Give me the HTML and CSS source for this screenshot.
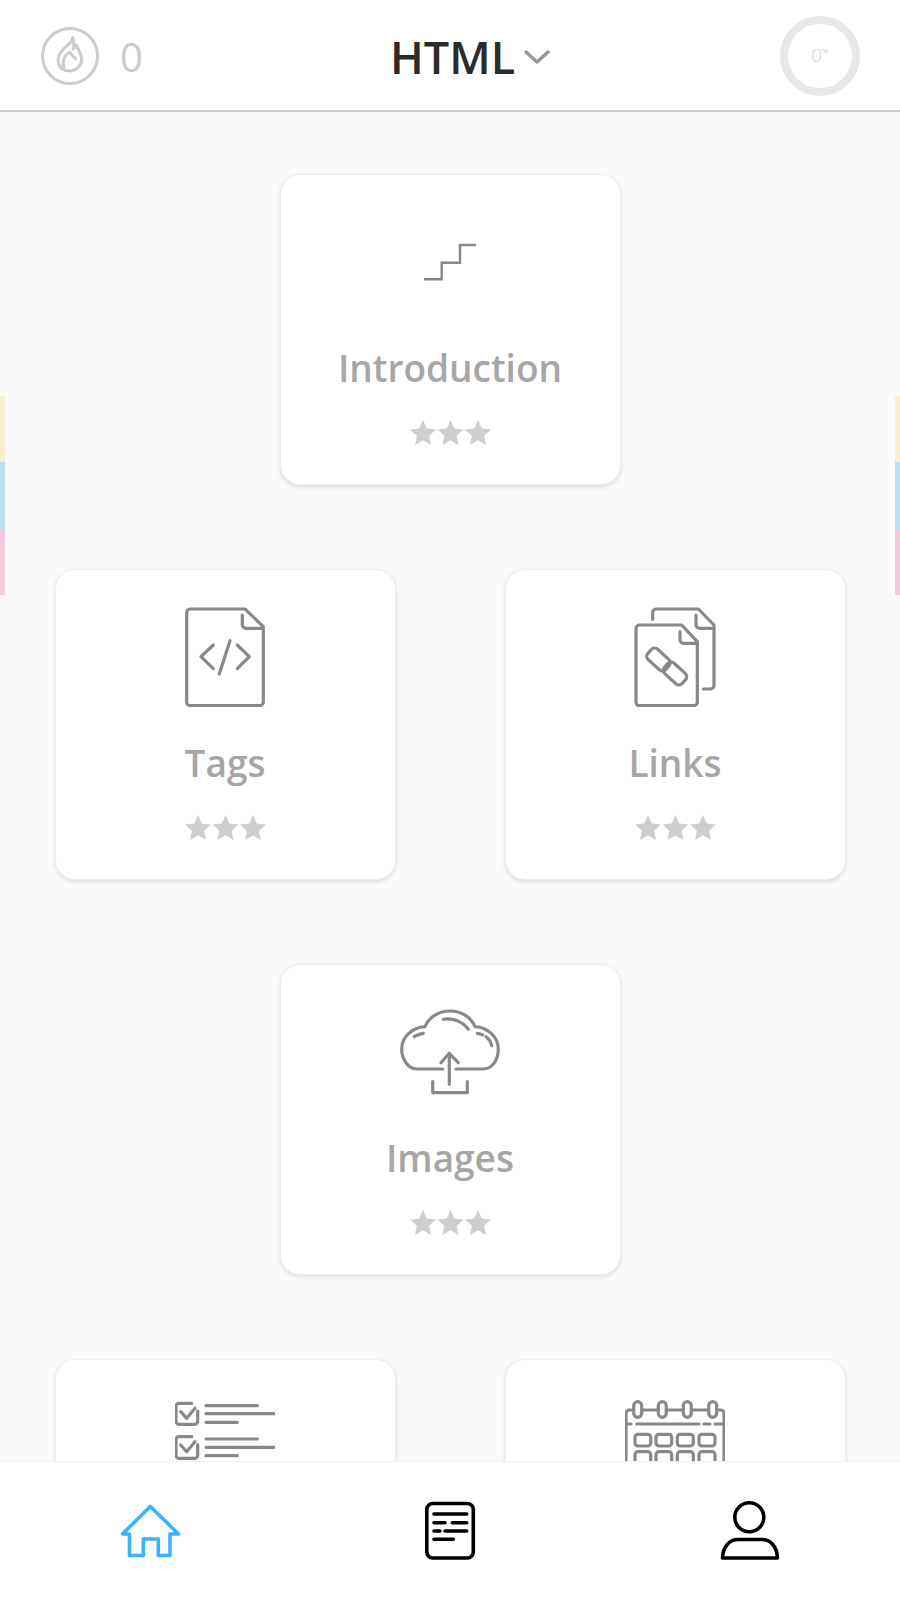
FILE: index.html
```html
<!DOCTYPE html>
<html lang="en">
<head>
  <meta charset="UTF-8">
  <title>HTML Course</title>
  <link rel="stylesheet" href="styles.css">
</head>
<body>

  <svg class="defs" width="0" height="0">
    <symbol id="star" viewBox="0 0 26 25">
      <polygon points="13,0 16.8,8.6 26,9.6 19.1,15.8 21,25 13,20.3 5,25 6.9,15.8 0,9.6 9.2,8.6"/>
    </symbol>
  </svg>

  <!-- Top bar -->
  <header class="topbar">
    <div class="streak">
      <svg class="streak-icon" width="58" height="58" viewBox="0 0 58 58">
        <circle cx="29" cy="29" r="27.5"/>
        <path d="M31.7 10.5C31 17 24 19 20 25C15 32 16.5 44 28 44C37 44 41 37 40.5 31C40 25 36.5 22 35.5 18C34.5 20 33.5 21 32 22C33 18 33 14 31.7 10.5Z"/>
        <path d="M23 41C20.5 34 23.5 28 29 25C29.5 28 33 29 34.5 32"/>
      </svg>
      <span class="streak-count">0</span>
    </div>
    <div class="course">
      <span class="course-name">HTML</span>
      <svg class="chevron" width="26" height="16" viewBox="0 0 26 16">
        <path d="M2 3L13 13L24 3"/>
      </svg>
    </div>
    <div class="progress">
      <span class="progress-num">0</span><span class="progress-pct">%</span>
    </div>
  </header>

  <!-- Lesson map -->
  <main class="lessons">
    <div class="row">
      <div class="card">
        <svg class="icon icon-thin" width="100" height="100" viewBox="0 0 100 100">
          <path d="M24 67.3H41.7V50.7H60V33H76"/>
        </svg>
        <div class="card-title">Introduction</div>
        <svg class="stars" width="81" height="25" viewBox="0 0 81 25">
          <use href="#star" x="0" width="26" height="25"/>
          <use href="#star" x="27.5" width="26" height="25"/>
          <use href="#star" x="55" width="26" height="25"/>
        </svg>
      </div>
    </div>

    <div class="row">
      <div class="card">
        <svg class="icon" width="100" height="100" viewBox="0 0 100 100">
          <path d="M70 2H15A3.5 3.5 0 0 0 11.7 5.5V95A3.5 3.5 0 0 0 15 98.7H85A3.5 3.5 0 0 0 88.3 95V19.7Z"/>
          <path d="M67.3 8V17.5A3.8 3.8 0 0 0 71 21.3H87"/>
          <path d="M38.3 38L26 49.7L38.3 61.7"/>
          <path d="M62.3 38L74.3 49.7L62.3 61.7"/>
          <path d="M55 33.7L44.3 67"/>
        </svg>
        <div class="card-title">Tags</div>
        <svg class="stars" width="81" height="25" viewBox="0 0 81 25">
          <use href="#star" x="0" width="26" height="25"/>
          <use href="#star" x="27.5" width="26" height="25"/>
          <use href="#star" x="55" width="26" height="25"/>
        </svg>
      </div>
      <div class="card">
        <svg class="icon" width="100" height="100" viewBox="0 0 100 100">
          <path d="M56.7 18H14.5A3.5 3.5 0 0 0 11 21.5V95A3.5 3.5 0 0 0 14.5 98.7H69A3.5 3.5 0 0 0 72.3 95V34.7Z"/>
          <path d="M55 24.7V33A3.5 3.5 0 0 0 58.5 36.3H71.7"/>
          <path d="M27.7 12.3V5.5A3.5 3.5 0 0 1 31 2H73.3L89 18V78.5A3.5 3.5 0 0 1 85.5 82H78.3"/>
          <path d="M71 8V17.5A3.8 3.8 0 0 0 75 21.3H86.7"/>
          <rect x="21.5" y="45.5" width="24" height="14" rx="4.5" transform="rotate(42 33.5 52.5)"/>
          <rect x="38" y="59.5" width="24" height="14" rx="4.5" transform="rotate(42 50 66.5)"/>
        </svg>
        <div class="card-title">Links</div>
        <svg class="stars" width="81" height="25" viewBox="0 0 81 25">
          <use href="#star" x="0" width="26" height="25"/>
          <use href="#star" x="27.5" width="26" height="25"/>
          <use href="#star" x="55" width="26" height="25"/>
        </svg>
      </div>
    </div>

    <div class="row">
      <div class="card">
        <svg class="icon" width="100" height="100" viewBox="0 0 100 100">
          <path d="M42.7 67H17C8 67 1.7 57 1.7 47C1.7 35 12 25.5 25 24.7C29 15 39 9 50 9C61 9 71 15 75 24.7C88 25.5 98.3 35 98.3 47C98.3 58 92 67 83.3 67H56"/>
          <path d="M43.3 17.3C52 15.5 62 19 68.3 27.3"/>
          <path d="M14.3 34.7C17 33 20 31.8 23.3 31.3"/>
          <path d="M77.3 31.3C79 31.5 81 32 82.7 33"/>
          <path d="M86 34.7C89 37 91 40 91.7 43.7"/>
          <path d="M49.3 82.3V52.3"/>
          <path d="M41 60.7L49.3 51.3L58.3 60.7"/>
          <path d="M32.7 79.7V90.7H67.3V79.7"/>
        </svg>
        <div class="card-title">Images</div>
        <svg class="stars" width="81" height="25" viewBox="0 0 81 25">
          <use href="#star" x="0" width="26" height="25"/>
          <use href="#star" x="27.5" width="26" height="25"/>
          <use href="#star" x="55" width="26" height="25"/>
        </svg>
      </div>
    </div>

    <div class="row">
      <div class="card">
        <svg class="icon" width="100" height="100" viewBox="0 0 100 100">
          <path d="M16.7 6.3H4A3 3 0 0 0 1 9.3V24.3A3 3 0 0 0 4 27.3H19.7A3 3 0 0 0 22.7 24.3V14"/>
          <path d="M5.7 14.7L11.7 21.3L20 11.3"/>
          <path d="M31 8.7H82.3M31 16.7H99.3M31 25.3H62.3"/>
          <path d="M16.7 39.7H4A3 3 0 0 0 1 42.7V58.3A3 3 0 0 0 4 61.3H19.7A3 3 0 0 0 22.7 58.3V47.5"/>
          <path d="M5.7 48L11.7 54.7L20 44.7"/>
          <path d="M31 42H82.3M31 50.3H99.3M31 58.7H62.3"/>
        </svg>
      </div>
      <div class="card">
        <svg class="icon" width="100" height="100" viewBox="0 0 100 100">
          <path d="M8.7 13H4.5A3.5 3.5 0 0 0 1 16.5V100M16.7 13H33.3M41.3 13H58.3M66.3 13H83.7M91.7 13H95.5A3.5 3.5 0 0 1 99 16.5V100"/>
          <rect x="8.7" y="4.7" width="8" height="15.6" rx="4"/>
          <rect x="33.3" y="4.7" width="8" height="15.6" rx="4"/>
          <rect x="58.3" y="4.7" width="8" height="15.6" rx="4"/>
          <rect x="83.7" y="4.7" width="8" height="15.6" rx="4"/>
          <path d="M1 27H6M11.7 27H74M79 27H85M90 27H99"/>
          <rect x="10" y="37.3" width="15.7" height="11.7" rx="3"/>
          <rect x="31" y="37.3" width="15.7" height="11.7" rx="3"/>
          <rect x="52.3" y="37.3" width="16" height="11.7" rx="3"/>
          <rect x="74" y="37.3" width="16" height="11.7" rx="3"/>
          <rect x="10" y="54.7" width="15.7" height="11.7" rx="3"/>
          <rect x="31" y="54.7" width="15.7" height="11.7" rx="3"/>
          <rect x="52.3" y="54.7" width="16" height="11.7" rx="3"/>
          <rect x="74" y="54.7" width="16" height="11.7" rx="3"/>
        </svg>
      </div>
    </div>
  </main>

  <!-- Colour strips on the edges -->
  <div class="strip strip-left"><i class="yellow"></i><i class="blue"></i><i class="pink"></i></div>
  <div class="strip strip-right"><i class="yellow"></i><i class="blue"></i><i class="pink"></i></div>

  <!-- Bottom tabs -->
  <nav class="tabs">
    <svg class="tab-icon tab-active" width="64" height="64" viewBox="0 0 64 64">
      <path d="M4.5 35L32.3 7.5L60.5 35H52V56.5H40.3V40H25.3V56.5H11.5V35Z"/>
    </svg>
    <svg class="tab-icon" width="64" height="64" viewBox="0 0 64 64">
      <rect x="8.8" y="4.5" width="46.5" height="54.5" rx="6"/>
      <path d="M16 15H48.7M16 23.7H27M34.3 23.7H48.7M16 32H22M27 32H48.7M16 40.3H35.3"/>
    </svg>
    <svg class="tab-icon" width="64" height="64" viewBox="0 0 64 64">
      <circle cx="31.3" cy="18.3" r="14.5"/>
      <path d="M4.5 59H59.5C59 47 52 40.5 44 40.5H20C12 40.5 5 47 4.5 59Z"/>
    </svg>
  </nav>

</body>
</html>
```

FILE: styles.css
```css
html, body {
  margin: 0;
  height: 100%;
}
body {
  position: relative;
  display: flex;
  flex-direction: column;
  height: 1600px;
  overflow: hidden;
  background: #fafafa;
  font-family: "Open Sans", "Noto Sans", sans-serif;
}
.defs {
  position: absolute;
}

.topbar {
  flex: none;
  display: flex;
  align-items: center;
  height: 107px;
  padding: 3px 40px 0 41px;
  background: #fff;
  border-bottom: 2px solid #ccc;
}
.streak {
  flex: 0 0 349px;
  display: flex;
  align-items: center;
  gap: 21px;
}
.streak-icon {
  margin-bottom: 2px;
  fill: none;
  stroke: #ccc;
  stroke-width: 3;
  stroke-linejoin: round;
  stroke-linecap: round;
}
.streak-count {
  font-size: 40px;
  font-weight: 500;
  color: #ccc;
}
.course {
  display: flex;
  align-items: center;
  gap: 9px;
}
.course-name {
  font-size: 45px;
  font-weight: 600;
  color: #2b2b2b;
}
.chevron {
  fill: none;
  stroke: #999;
  stroke-width: 3.5;
  stroke-linecap: round;
  stroke-linejoin: round;
}
.progress {
  display: flex;
  align-items: flex-start;
  justify-content: center;
  box-sizing: border-box;
  width: 80px;
  height: 80px;
  margin-left: auto;
  margin-bottom: 2px;
  padding-top: 18px;
  border: 8px solid #e7e7e7;
  border-radius: 50%;
  color: #ccc;
}
.progress-num {
  font-size: 19px;
  font-weight: 300;
}
.progress-pct {
  margin-top: 3px;
  font-size: 8px;
}

.lessons {
  flex: 1;
  display: flex;
  flex-direction: column;
  gap: 84px;
  min-height: 0;
  padding-top: 62px;
  overflow: hidden;
}
.row {
  flex: none;
  display: flex;
  justify-content: center;
  gap: 109px;
}
.card {
  display: flex;
  flex-direction: column;
  align-items: center;
  box-sizing: border-box;
  width: 341px;
  height: 311px;
  padding-top: 37px;
  background: #fff;
  border: 1px solid #efefef;
  border-radius: 20px;
  box-shadow: 0 2px 4px rgba(0,0,0,0.12);
}
.icon {
  flex: none;
  fill: none;
  stroke: #888;
  stroke-width: 3.2;
  stroke-linecap: round;
  stroke-linejoin: round;
}
.icon-thin {
  stroke-width: 2.4;
  stroke-linecap: butt;
  stroke-linejoin: miter;
}
.card-title {
  margin-top: 31px;
  font-size: 37px;
  line-height: 50px;
  font-weight: 600;
  color: #a6a6a6;
}
.stars {
  flex: none;
  margin-top: 27px;
  fill: #cfcdcf;
}

.strip {
  position: absolute;
  top: 396px;
  display: flex;
  flex-direction: column;
  width: 5px;
}
.strip i {
  display: block;
  height: 66.3px;
}
.strip-left {
  left: 0;
}
.strip-right {
  right: 0;
}
.yellow {
  background: #faeed2;
}
.blue {
  background: #bfdff0;
}
.pink {
  background: #f0cbdb;
}

.tabs {
  flex: none;
  display: grid;
  grid-template-columns: repeat(3, 1fr);
  justify-items: center;
  align-items: center;
  height: 138px;
  background: #fff;
  border-top: 1px solid #f0f0f0;
}
.tab-icon {
  fill: none;
  stroke: #000;
  stroke-width: 3.6;
  stroke-linecap: round;
  stroke-linejoin: round;
}
.tab-active {
  stroke: #3cb1ff;
}
```
